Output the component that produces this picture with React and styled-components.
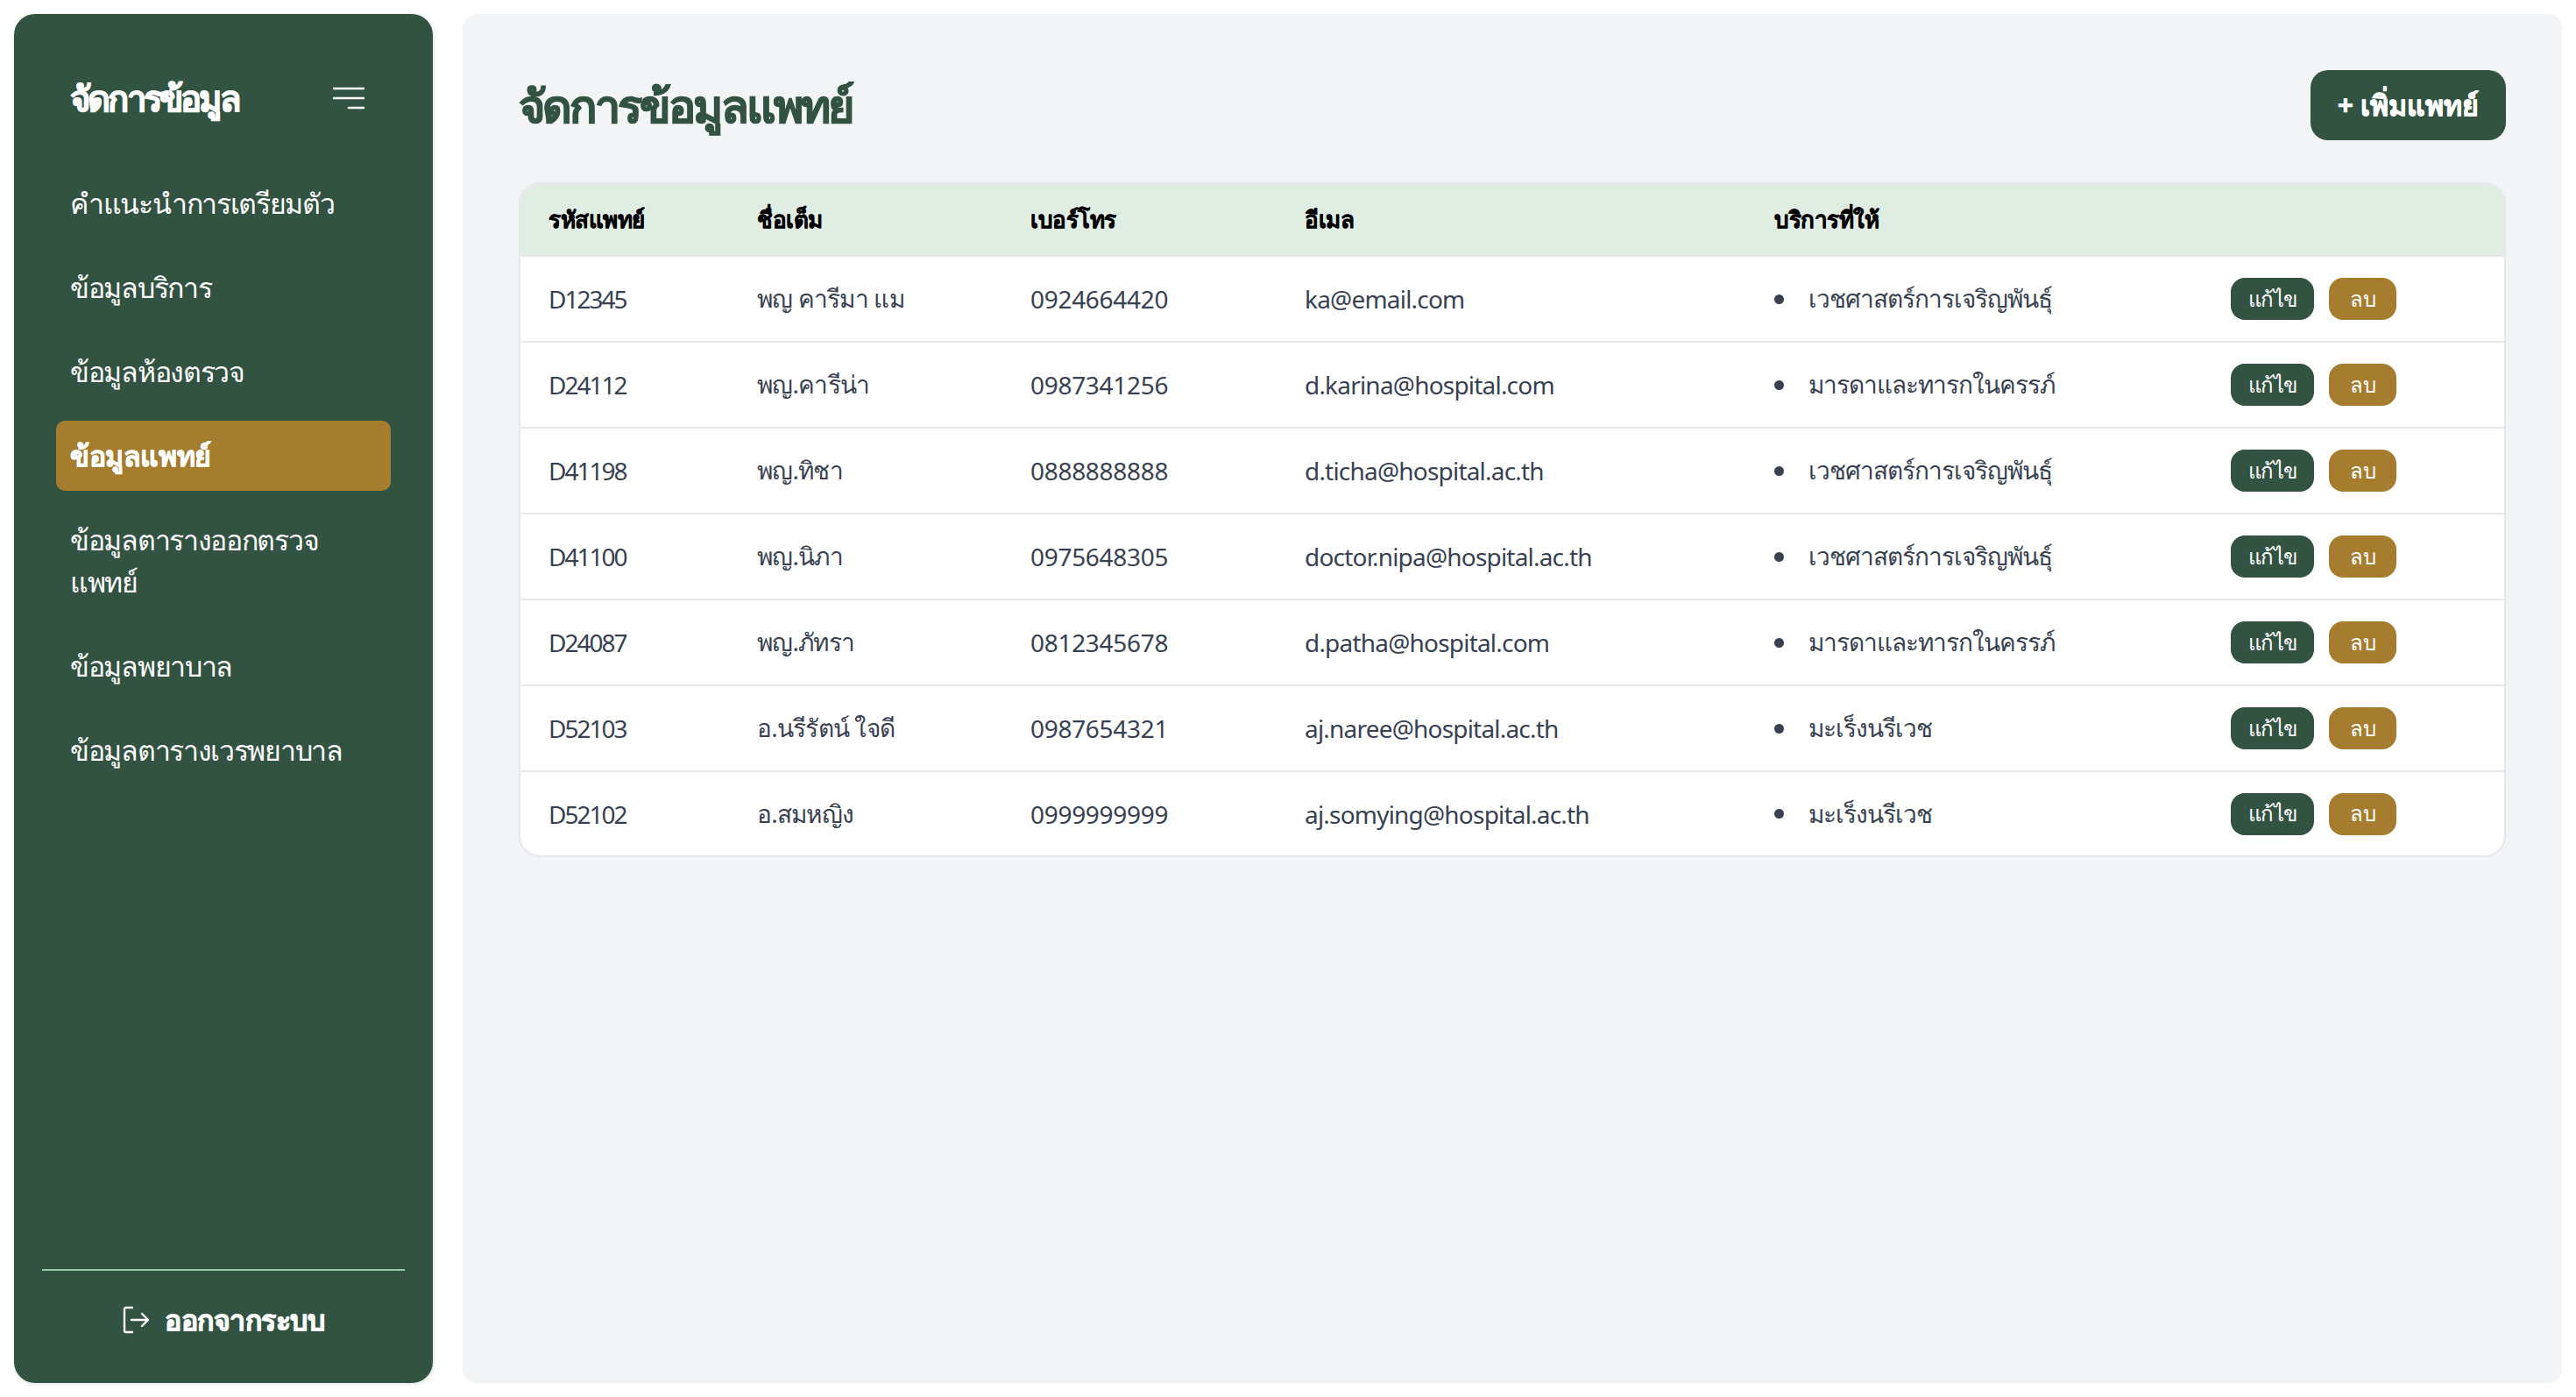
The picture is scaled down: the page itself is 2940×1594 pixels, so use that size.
import React from "react";
import styled, { createGlobalStyle } from "styled-components";

const Global = createGlobalStyle`
  * { box-sizing: border-box; }
  html, body { margin: 0; padding: 0; background: #fff; }
  body { font-family: "Noto Sans", "Inter", sans-serif; }
`;

const GREEN = "#325341";
const GOLD = "#a67d2f";

const Page = styled.div`
  display: flex;
  gap: 34px;
  height: 1594px;
  padding: 16px;
`;
const Sidebar = styled.aside`
  display: flex;
  flex-direction: column;
  width: 478px;
  flex: none;
  background: ${GREEN};
  border-radius: 24px;
  box-shadow: 1px 1px 4px rgba(0, 0, 0, 0.14);
  color: #fff;
`;
const Brand = styled.div`
  display: flex;
  align-items: center;
  justify-content: space-between;
  height: 96px;
  margin-top: 48px;
  padding: 0 78px 0 64px;
`;
const BrandTitle = styled.h2`
  margin: 0;
  font-size: 40px;
  font-weight: 800;
  line-height: 60px;
  letter-spacing: -2.8px;
  -webkit-text-stroke: 1px #fff;
`;
const Nav = styled.nav`
  display: flex;
  flex-direction: column;
  gap: 16px;
  margin-top: 32px;
  padding: 0 48px;
  flex: 1;
`;
const NavItem = styled.a`
  display: block;
  padding: 16px;
  border-radius: 10px;
  font-size: 32px;
  line-height: 48px;
  letter-spacing: ${(p) => (p.$active ? "-0.4px" : "-1.3px")};
  font-weight: ${(p) => (p.$active ? 700 : 500)};
  background: ${(p) => (p.$active ? GOLD : "transparent")};
  -webkit-text-stroke: ${(p) => (p.$active ? "0.6px #fff" : "0")};
`;
const Foot = styled.div`
  margin: 0 32px;
  height: 130px;
  border-top: 2px solid #9cc7ab;
`;
const Logout = styled.button`
  display: flex;
  align-items: center;
  justify-content: center;
  gap: 18px;
  width: 100%;
  height: 112px;
  padding: 0;
  border: 0;
  background: none;
  color: #fff;
  font: 700 32px "Noto Sans", sans-serif;
  letter-spacing: -0.5px;
  -webkit-text-stroke: 0.8px #fff;
`;
const Main = styled.main`
  flex: 1;
  background: #f3f4f6;
  border-radius: 16px;
  padding: 64px;
`;
const Head = styled.header`
  display: flex;
  align-items: center;
  justify-content: space-between;
  height: 80px;
  margin-bottom: 48px;
`;
const Title = styled.h1`
  margin: 0;
  font-size: 52px;
  line-height: 80px;
  font-weight: 800;
  letter-spacing: -2.8px;
  color: ${GREEN};
  -webkit-text-stroke: 1px ${GREEN};
`;
const AddButton = styled.button`
  width: 223px;
  height: 80px;
  padding: 0;
  border: 0;
  border-radius: 20px;
  background: ${GREEN};
  color: #fff;
  font: 700 32px "Noto Sans", sans-serif;
  -webkit-text-stroke: 0.7px #fff;
`;
const Card = styled.div`
  background: #fff;
  border: 2px solid #e5e7eb;
  border-radius: 24px;
  overflow: hidden;
`;
const Table = styled.table`
  width: 100%;
  border-collapse: collapse;
  table-layout: fixed;
`;
const Th = styled.th`
  height: 82px;
  padding: 0 32px;
  background: #e0ede3;
  border-bottom: 2px solid #e5e7eb;
  color: #000;
  font-size: 26px;
  font-weight: 700;
  letter-spacing: -0.5px;
  text-align: left;
  -webkit-text-stroke: 0.4px #000;
`;
const Td = styled.td`
  height: ${(p) => (p.$last ? "96px" : "98px")};
  padding: 0 32px;
  border-bottom: ${(p) => (p.$last ? "0" : "2px solid #e5e7eb")};
  color: #374151;
  font-size: 28px;
  letter-spacing: ${(p) => p.$track || "-1px"};
`;
const Service = styled.div`
  display: flex;
  align-items: center;
  gap: 28px;
`;
const Dot = styled.span`
  width: 11px;
  height: 11px;
  flex: none;
  border-radius: 50%;
  background: #374151;
`;
const Actions = styled.div`
  display: flex;
  gap: 17px;
`;
const RowButton = styled.button`
  width: ${(p) => (p.$gold ? "77px" : "95px")};
  height: 48px;
  padding: 0;
  border: 0;
  border-radius: 16px;
  background: ${(p) => (p.$gold ? GOLD : GREEN)};
  color: #fff;
  font: 500 24px "Noto Sans", sans-serif;
  letter-spacing: -0.5px;
`;

const MENU = [
  "คำแนะนำการเตรียมตัว",
  "ข้อมูลบริการ",
  "ข้อมูลห้องตรวจ",
  "ข้อมูลแพทย์",
  "ข้อมูลตารางออกตรวจแพทย์",
  "ข้อมูลพยาบาล",
  "ข้อมูลตารางเวรพยาบาล",
];
const COLS = [238, 312, 313, 536, 521, 344];
const HEADS = ["รหัสแพทย์", "ชื่อเต็ม", "เบอร์โทร", "อีเมล", "บริการที่ให้", ""];
const S1 = "เวชศาสตร์การเจริญพันธุ์";
const S2 = "มารดาและทารกในครรภ์";
const S3 = "มะเร็งนรีเวช";
const ROWS = [
  ["D12345", "พญ คารีมา แม", "0924664420", "ka@email.com", S1],
  ["D24112", "พญ.คารีน่า", "0987341256", "d.karina@hospital.com", S2],
  ["D41198", "พญ.ทิชา", "0888888888", "d.ticha@hospital.ac.th", S1],
  ["D41100", "พญ.นิภา", "0975648305", "doctor.nipa@hospital.ac.th", S1],
  ["D24087", "พญ.ภัทรา", "0812345678", "d.patha@hospital.com", S2],
  ["D52103", "อ.นรีรัตน์ ใจดี", "0987654321", "aj.naree@hospital.ac.th", S3],
  ["D52102", "อ.สมหญิง", "0999999999", "aj.somying@hospital.ac.th", S3],
];

const MenuIcon = () => (
  <svg width="36" height="26" viewBox="0 0 36 26" fill="none" stroke="#fff" strokeWidth="2.6" strokeLinecap="round">
    <path d="M1 2h34M1 13h34M18 24h17" />
  </svg>
);
const LogoutIcon = () => (
  <svg width="30" height="32" viewBox="0 0 30 32" fill="none" stroke="#fff" strokeWidth="2.4" strokeLinecap="round" strokeLinejoin="round">
    <path d="M11 2H4a2 2 0 0 0-2 2v24a2 2 0 0 0 2 2h7M10 16h19M22 9l7 7-7 7" />
  </svg>
);

export default function App() {
  return (
    <Page>
      <Global />
      <Sidebar>
        <Brand>
          <BrandTitle>จัดการข้อมูล</BrandTitle>
          <MenuIcon />
        </Brand>
        <Nav>
          {MENU.map((m) => (
            <NavItem key={m} $active={m === "ข้อมูลแพทย์"}>{m}</NavItem>
          ))}
        </Nav>
        <Foot>
          <Logout><LogoutIcon />ออกจากระบบ</Logout>
        </Foot>
      </Sidebar>
      <Main>
        <Head>
          <Title>จัดการข้อมูลแพทย์</Title>
          <AddButton>+ เพิ่มแพทย์</AddButton>
        </Head>
        <Card>
          <Table>
            <colgroup>{COLS.map((c, i) => <col key={i} width={c} />)}</colgroup>
            <thead>
              <tr>{HEADS.map((h, i) => <Th key={i}>{h}</Th>)}</tr>
            </thead>
            <tbody>
              {ROWS.map((r, i) => {
                const last = i === ROWS.length - 1;
                return (
                  <tr key={r[0]}>
                    <Td $last={last} $track="-2px">{r[0]}</Td>
                    <Td $last={last} $track="-0.8px">{r[1]}</Td>
                    <Td $last={last} $track="-0.3px">{r[2]}</Td>
                    <Td $last={last} $track="-0.8px">{r[3]}</Td>
                    <Td $last={last}><Service><Dot />{r[4]}</Service></Td>
                    <Td $last={last}>
                      <Actions>
                        <RowButton>แก้ไข</RowButton>
                        <RowButton $gold>ลบ</RowButton>
                      </Actions>
                    </Td>
                  </tr>
                );
              })}
            </tbody>
          </Table>
        </Card>
      </Main>
    </Page>
  );
}
